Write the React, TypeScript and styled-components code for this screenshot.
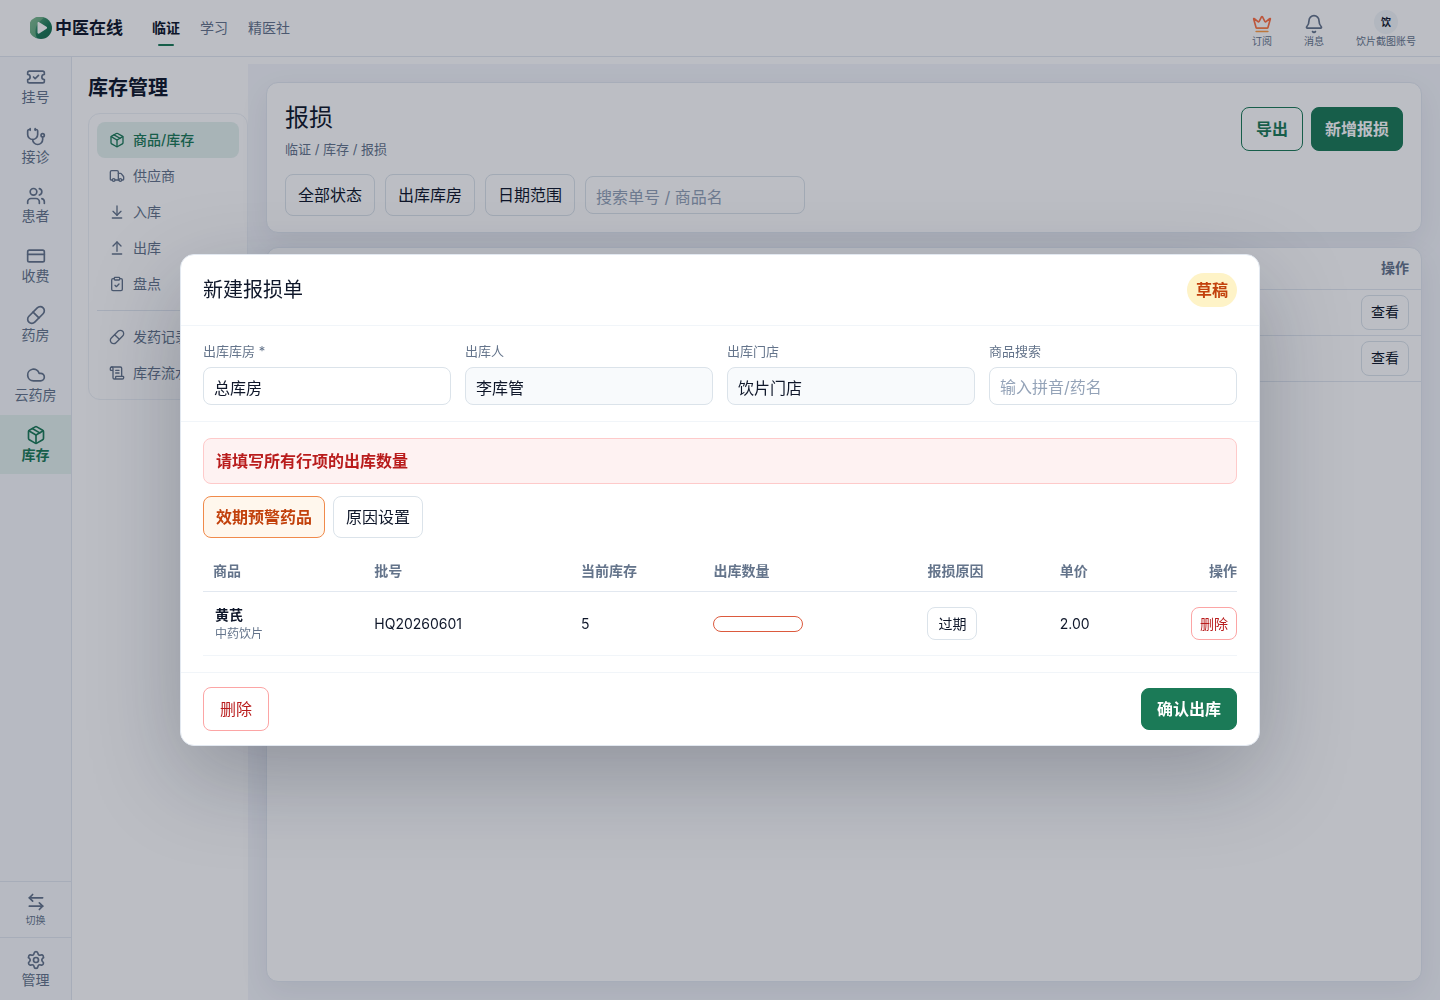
import React from 'react';
import styled, { createGlobalStyle, css } from 'styled-components';
import {
  ArrowDownToLine,
  ArrowLeftRight,
  ArrowUpFromLine,
  Bell,
  ClipboardCheck,
  Cloud,
  CreditCard,
  Crown,
  Package,
  Pill,
  ScrollText,
  Settings,
  Stethoscope,
  TicketCheck,
  Truck,
  Users,
} from 'lucide-react';

const c = {
  ink: '#0f172a',
  slate: '#64748b',
  line: '#e2e8f0',
  soft: '#f1f5f9',
  green: '#1b7a57',
  mint: '#e4f1ee',
  red: '#b91c1c',
};

const GlobalStyle = createGlobalStyle`
  *, *::before, *::after { box-sizing: border-box; }
  body {
    margin: 0;
    background: #fff;
    color: ${c.ink};
    font-family: Inter, "Noto Sans CJK SC", sans-serif;
    font-size: 14px;
    line-height: 20px;
  }
  button, input { font: inherit; color: inherit; margin: 0; }
  button { cursor: pointer; }
  a { color: inherit; text-decoration: none; }
  h1, h2, p { margin: 0; }
`;

const Shell = styled.div`
  height: calc(100vh - 1px);
  display: flex;
  flex-direction: column;
`;

/* Top bar */
const TopBar = styled.header`
  height: 57px;
  flex: none;
  display: flex;
  align-items: center;
  padding: 0 24px 0 30px;
  border-bottom: 1px solid ${c.line};
  background: #fff;
`;

const Brand = styled.a`
  display: flex;
  align-items: center;
  gap: 3px;
  font-size: 17px;
  line-height: 24px;
  font-weight: 600;
`;

const TopNav = styled.nav`
  display: flex;
  gap: 20px;
  margin-left: 29px;
`;

const TopLink = styled.a<{ $active?: boolean }>`
  position: relative;
  color: ${(p) => (p.$active ? c.ink : c.slate)};
  font-weight: ${(p) => (p.$active ? 600 : 400)};
  ${(p) =>
    p.$active &&
    css`
      &::after {
        content: '';
        position: absolute;
        left: 6px;
        right: 6px;
        bottom: -8px;
        height: 2px;
        border-radius: 1px;
        background: ${c.green};
      }
    `}
`;

const TopActions = styled.div`
  display: flex;
  align-items: flex-end;
  gap: 32px;
  margin-left: auto;
  padding-top: 2px;
`;

const TopAction = styled.button`
  display: flex;
  flex-direction: column;
  align-items: center;
  padding: 0;
  border: 0;
  background: none;
  color: ${c.slate};
  font-size: 10px;
  line-height: 14px;
`;

const Avatar = styled.span`
  display: grid;
  place-items: center;
  width: 24px;
  height: 24px;
  border-radius: 50%;
  background: #f1f5f9;
  color: ${c.ink};
  font-weight: 600;
`;

/* Columns */
const Columns = styled.div`
  flex: 1;
  min-height: 0;
  display: flex;
`;

const Rail = styled.nav`
  width: 72px;
  flex: none;
  display: flex;
  flex-direction: column;
  border-right: 1px solid ${c.line};
  background: #f8fafc;
`;

const RailLink = styled.a<{ $active?: boolean }>`
  display: flex;
  flex-direction: column;
  align-items: center;
  padding: 10px 0;
  line-height: 1.4;
  color: ${(p) => (p.$active ? c.green : c.slate)};
  font-weight: ${(p) => (p.$active ? 600 : 400)};
  background: ${(p) => (p.$active ? c.mint : 'transparent')};
`;

const RailSwitch = styled.button`
  display: flex;
  flex-direction: column;
  align-items: center;
  margin-top: auto;
  padding: 10px 0 8px;
  border: 0;
  border-top: 1px solid ${c.line};
  background: none;
  color: ${c.slate};
  font-size: 10px;
  line-height: 17px;
`;

const RailFoot = styled.div`
  padding-top: 2px;
  border-top: 1px solid ${c.line};
`;

const Side = styled.aside`
  width: 176px;
  flex: none;
  padding: 16px 0 16px 16px;
  background: #fff;
`;

const SideTitle = styled.h2`
  font-size: 20px;
  line-height: 30px;
  font-weight: 600;
`;

const SideNav = styled.nav`
  margin-top: 10px;
  padding: 8px;
  border: 1px solid #edf1f6;
  border-radius: 12px;
`;

const SideLink = styled.a<{ $active?: boolean }>`
  display: flex;
  align-items: center;
  gap: 8px;
  height: 36px;
  padding: 0 12px;
  border-radius: 8px;
  white-space: nowrap;
  color: ${(p) => (p.$active ? c.green : c.slate)};
  font-weight: ${(p) => (p.$active ? 500 : 400)};
  background: ${(p) => (p.$active ? c.mint : 'transparent')};
`;

const SideRule = styled.hr`
  height: 1px;
  margin: 8px 0;
  border: 0;
  background: ${c.line};
`;

const Main = styled.main`
  flex: 1;
  min-width: 0;
  display: flex;
  flex-direction: column;
  gap: 14px;
  margin-top: 7px;
  padding: 18px;
  background: #f4f6fb;
`;

const Card = styled.section<{ $fill?: boolean }>`
  border: 1px solid ${c.line};
  border-radius: 12px;
  background: #fff;
  box-shadow: 0 10px 30px rgba(15, 23, 42, 0.07);
  ${(p) => (p.$fill ? 'flex: 1;' : 'padding: 16px 18px;')}
`;

const PageHead = styled.div`
  display: flex;
  align-items: center;
  justify-content: space-between;
`;

const PageTitle = styled.h1`
  font-size: 24px;
  line-height: 38px;
  font-weight: 400;
`;

const Crumbs = styled.p`
  margin-top: 2px;
  font-size: 13px;
  color: ${c.slate};
`;

const Row = styled.div<{ $gap: number }>`
  display: flex;
  align-items: center;
  gap: ${(p) => p.$gap}px;
`;

const Filters = styled(Row)`
  margin-top: 15px;
`;

type Tone = 'plain' | 'outline' | 'solid' | 'warn' | 'danger';
const tones = {
  plain: css`border-color: #dbe3ea; background: #fff;`,
  outline: css`border-color: ${c.green}; background: #fff; color: ${c.green}; font-weight: 600;`,
  solid: css`border-color: ${c.green}; background: ${c.green}; color: #fff; font-weight: 600;`,
  warn: css`border-color: #f08a4b; background: #fff7ed; color: #c2410c; font-weight: 600;`,
  danger: css`border-color: #fca5a5; background: #fff; color: ${c.red};`,
};

const Button = styled.button<{ $tone?: Tone; $h?: number; $px?: number; $small?: boolean }>`
  height: ${(p) => p.$h ?? 42}px;
  padding: 0 ${(p) => p.$px ?? 12}px;
  border: 1px solid;
  border-radius: 8px;
  font-size: ${(p) => (p.$small ? 14 : 16)}px;
  line-height: 24px;
  white-space: nowrap;
  ${(p) => tones[p.$tone ?? 'plain']}
`;

const TextInput = styled.input`
  width: 100%;
  height: 38px;
  padding: 3px 10px 0;
  border: 1px solid #dbe3ea;
  border-radius: 8px;
  outline: 0;
  background: #fff;
  font-size: 16px;
  &::placeholder { color: #94a3b8; opacity: 1; }
  &:read-only { background: #f8fafc; }
`;

const SearchInput = styled(TextInput)`
  width: 220px;
`;

const RecordTable = styled.table`
  width: 100%;
  border-collapse: collapse;
  text-align: right;
  th {
    height: 41px;
    padding: 0 12px;
    border-bottom: 1px solid ${c.line};
    color: ${c.slate};
    font-weight: 600;
  }
  td {
    height: 46px;
    padding: 0 12px;
    border-bottom: 1px solid ${c.line};
  }
  button { vertical-align: middle; }
`;

/* Dialog */
const Overlay = styled.div`
  position: fixed;
  inset: 0 0 1px;
  display: grid;
  place-items: center;
  background: rgba(15, 23, 42, 0.28);
`;

const Dialog = styled.div`
  width: min(1080px, calc(100vw - 48px));
  border: 1px solid ${c.line};
  border-radius: 14px;
  background: #fff;
  box-shadow: 0 30px 90px rgba(15, 23, 42, 0.26);
`;

const DialogHead = styled.div`
  display: flex;
  align-items: center;
  justify-content: space-between;
  padding: 18px 22px;
  border-bottom: 1px solid ${c.soft};
`;

const DialogTitle = styled.h2`
  font-size: 20px;
  line-height: 30px;
  font-weight: 400;
`;

const Badge = styled.span`
  padding: 5px 9px;
  border-radius: 17px;
  background: #fef3c7;
  color: #c2410c;
  font-size: 16px;
  line-height: 24px;
  font-weight: 600;
`;

const Form = styled.div`
  display: grid;
  grid-template-columns: repeat(4, minmax(0, 1fr));
  gap: 14px;
  padding: 16px 22px;
  border-bottom: 1px solid ${c.soft};
`;

const Field = styled.label`
  display: grid;
  gap: 6px;
  font-size: 13px;
  line-height: 19px;
  color: ${c.slate};
  input { color: ${c.ink}; }
`;

const DialogBody = styled.div`
  display: grid;
  gap: 12px;
  padding: 16px 22px;
`;

const Alert = styled.p`
  padding: 10px 12px;
  border: 1px solid #fecaca;
  border-radius: 8px;
  background: #fef2f2;
  color: ${c.red};
  font-size: 16px;
  line-height: 24px;
  font-weight: 600;
`;

const ItemTable = styled.table`
  width: 100%;
  table-layout: fixed;
  border-collapse: collapse;
  text-align: left;
  th, td {
    padding: 0 0 0 10px;
    border-bottom: 1px solid ${c.line};
  }
  th {
    height: 42px;
    color: ${c.slate};
    font-weight: 600;
  }
  td {
    height: 64px;
    border-color: ${c.soft};
  }
  td:first-child { padding-left: 12px; }
  th:last-child, td:last-child { text-align: right; }
  button { vertical-align: middle; }
`;

const Col = styled.col<{ $w: number }>`
  width: ${(p) => p.$w}%;
`;

const ItemName = styled.div`
  font-weight: 600;
`;

const ItemKind = styled.div`
  font-size: 12px;
  line-height: 18px;
  color: ${c.slate};
`;

const QtyInput = styled.input`
  display: block;
  width: 90px;
  height: 16px;
  padding: 0 8px;
  border: 1px solid #dc5a3e;
  border-radius: 8px;
  outline: 0;
  background: #fff;
  font-size: 12px;
`;

const DialogFoot = styled.div`
  display: flex;
  align-items: center;
  justify-content: space-between;
  padding: 14px 22px;
  border-top: 1px solid ${c.soft};
`;

const Logo = () => (
  <svg width="22" height="22" viewBox="0 0 22 22" aria-hidden="true">
    <defs>
      <linearGradient id="logo-base" x1="0" y1="0" x2="1" y2="1">
        <stop offset="0" stopColor="#6fb388" />
        <stop offset="0.6" stopColor="#1b7a57" />
        <stop offset="1" stopColor="#176b4d" />
      </linearGradient>
      <linearGradient id="logo-leaf" x1="0" y1="0" x2="1" y2="1">
        <stop offset="0" stopColor="#86bf95" />
        <stop offset="1" stopColor="#4f9f74" />
      </linearGradient>
    </defs>
    <circle cx="11" cy="11" r="11" fill="url(#logo-base)" />
    <path d="M14 .4A11 11 0 1 0 7 21.200C4.800 17 5 11 7.500 7 9.500 4 12 2.500 14 .4Z" fill="url(#logo-leaf)" />
    <path d="M7.500 6.200c0-1 .9-1.500 1.700-1l7.300 4.600c.8.500.8 1.500 0 2l-7.300 4.800c-.8.500-1.700 0-1.700-1Z" fill="#fff" />
  </svg>
);

const CrownIcon = () => (
  <Crown size={20} color="url(#crown-stroke)">
    <defs>
      <linearGradient id="crown-stroke" gradientUnits="userSpaceOnUse" x1="0" y1="3" x2="0" y2="21">
        <stop offset="0" stopColor="#ff7043" />
        <stop offset="0.7" stopColor="#ff7043" />
        <stop offset="1" stopColor="#ff9f43" />
      </linearGradient>
    </defs>
  </Crown>
);

const railItems = [
  { label: '挂号', Icon: TicketCheck },
  { label: '接诊', Icon: Stethoscope },
  { label: '患者', Icon: Users },
  { label: '收费', Icon: CreditCard },
  { label: '药房', Icon: Pill },
  { label: '云药房', Icon: Cloud },
  { label: '库存', Icon: Package, active: true },
];

const stockItems = [
  { label: '商品/库存', Icon: Package, active: true },
  { label: '供应商', Icon: Truck },
  { label: '入库', Icon: ArrowDownToLine },
  { label: '出库', Icon: ArrowUpFromLine },
  { label: '盘点', Icon: ClipboardCheck },
];

const recordItems = [
  { label: '发药记录', Icon: Pill },
  { label: '库存流水', Icon: ScrollText },
];

const columns = [
  { label: '商品', width: 15.6 },
  { label: '批号', width: 20 },
  { label: '当前库存', width: 12.8 },
  { label: '出库数量', width: 20.7 },
  { label: '报损原因', width: 12.8 },
  { label: '单价', width: 10 },
  { label: '操作', width: 8.1 },
];

export default function App() {
  return (
    <>
      <GlobalStyle />
      <Shell>
        <TopBar>
          <Brand href="#">
            <Logo />
            中医在线
          </Brand>
          <TopNav>
            <TopLink href="#" $active>临证</TopLink>
            <TopLink href="#">学习</TopLink>
            <TopLink href="#">精医社</TopLink>
          </TopNav>
          <TopActions>
            <TopAction type="button">
              <CrownIcon />
              订阅
            </TopAction>
            <TopAction type="button">
              <Bell size={20} />
              消息
            </TopAction>
            <TopAction type="button">
              <Avatar>饮</Avatar>
              饮片截图账号
            </TopAction>
          </TopActions>
        </TopBar>

        <Columns>
          <Rail>
            {railItems.map(({ label, Icon, active }) => (
              <RailLink key={label} href="#" $active={active}>
                <Icon size={20} />
                {label}
              </RailLink>
            ))}
            <RailSwitch type="button">
              <ArrowLeftRight size={20} />
              切换
            </RailSwitch>
            <RailFoot>
              <RailLink href="#">
                <Settings size={20} />
                管理
              </RailLink>
            </RailFoot>
          </Rail>

          <Side>
            <SideTitle>库存管理</SideTitle>
            <SideNav>
              {stockItems.map(({ label, Icon, active }) => (
                <SideLink key={label} href="#" $active={active}>
                  <Icon size={16} />
                  {label}
                </SideLink>
              ))}
              <SideRule />
              {recordItems.map(({ label, Icon }) => (
                <SideLink key={label} href="#">
                  <Icon size={16} />
                  {label}
                </SideLink>
              ))}
            </SideNav>
          </Side>

          <Main>
            <Card>
              <PageHead>
                <div>
                  <PageTitle>报损</PageTitle>
                  <Crumbs>临证 / 库存 / 报损</Crumbs>
                </div>
                <Row $gap={8}>
                  <Button type="button" $tone="outline" $h={44} $px={14}>导出</Button>
                  <Button type="button" $tone="solid" $h={44} $px={13}>新增报损</Button>
                </Row>
              </PageHead>
              <Filters $gap={10}>
                <Button type="button">全部状态</Button>
                <Button type="button">出库库房</Button>
                <Button type="button">日期范围</Button>
                <SearchInput aria-label="搜索单号 / 商品名" placeholder="搜索单号 / 商品名" />
              </Filters>
            </Card>
            <Card $fill>
              <RecordTable>
                <thead>
                  <tr><th scope="col">操作</th></tr>
                </thead>
                <tbody>
                  {[1, 2].map((id) => (
                    <tr key={id}>
                      <td><Button type="button" $small $h={35} $px={9}>查看</Button></td>
                    </tr>
                  ))}
                </tbody>
              </RecordTable>
            </Card>
          </Main>
        </Columns>
      </Shell>

      <Overlay>
        <Dialog role="dialog" aria-modal="true" aria-labelledby="dialog-title">
          <DialogHead>
            <DialogTitle id="dialog-title">新建报损单</DialogTitle>
            <Badge>草稿</Badge>
          </DialogHead>
          <Form>
            <Field>
              出库库房 *
              <TextInput defaultValue="总库房" />
            </Field>
            <Field>
              出库人
              <TextInput value="李库管" readOnly />
            </Field>
            <Field>
              出库门店
              <TextInput value="饮片门店" readOnly />
            </Field>
            <Field>
              商品搜索
              <TextInput placeholder="输入拼音/药名" />
            </Field>
          </Form>
          <DialogBody>
            <Alert role="alert">请填写所有行项的出库数量</Alert>
            <Row $gap={8}>
              <Button type="button" $tone="warn">效期预警药品</Button>
              <Button type="button">原因设置</Button>
            </Row>
            <ItemTable>
              <colgroup>
                {columns.map((col) => <Col key={col.label} $w={col.width} />)}
              </colgroup>
              <thead>
                <tr>
                  {columns.map((col) => <th key={col.label} scope="col">{col.label}</th>)}
                </tr>
              </thead>
              <tbody>
                <tr>
                  <td>
                    <ItemName>黄芪</ItemName>
                    <ItemKind>中药饮片</ItemKind>
                  </td>
                  <td>HQ20260601</td>
                  <td>5</td>
                  <td><QtyInput aria-label="出库数量" aria-invalid="true" /></td>
                  <td><Button type="button" $small $h={33} $px={10}>过期</Button></td>
                  <td>2.00</td>
                  <td><Button type="button" $tone="danger" $small $h={33} $px={8}>删除</Button></td>
                </tr>
              </tbody>
            </ItemTable>
          </DialogBody>
          <DialogFoot>
            <Button type="button" $tone="danger" $h={44} $px={16}>删除</Button>
            <Button type="button" $tone="solid" $px={15}>确认出库</Button>
          </DialogFoot>
        </Dialog>
      </Overlay>
    </>
  );
}
